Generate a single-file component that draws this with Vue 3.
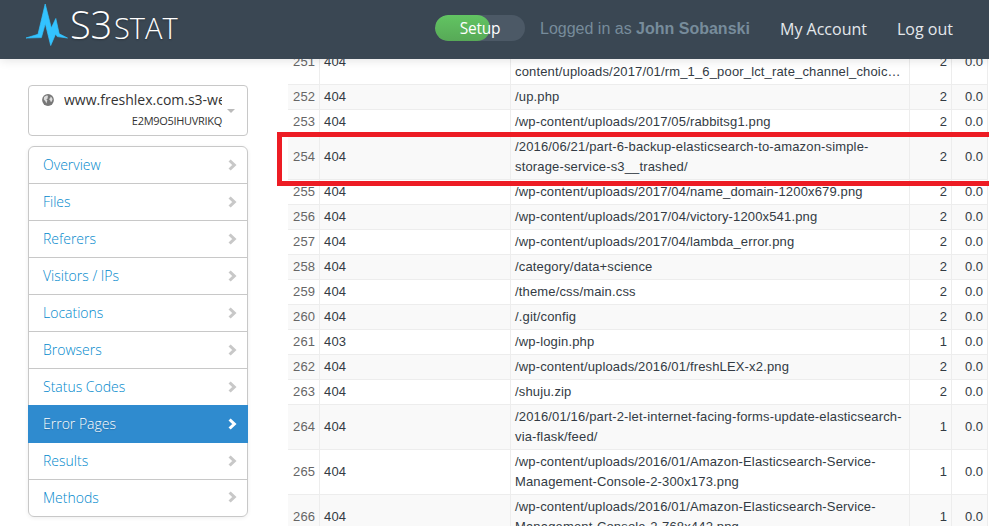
<script setup>
const links = ['Overview', 'Files', 'Referers', 'Visitors / IPs', 'Locations', 'Browsers', 'Status Codes', 'Error Pages', 'Results', 'Methods']
const active = 'Error Pages'

const rows = [
  { n: 251, code: 404, lines: ['/wp-', 'content/uploads/2017/01/rm_1_6_poor_lct_rate_channel_choic…'], hits: 2 },
  { n: 252, code: 404, lines: ['/up.php'], hits: 2 },
  { n: 253, code: 404, lines: ['/wp-content/uploads/2017/05/rabbitsg1.png'], hits: 2 },
  { n: 254, code: 404, lines: ['/2016/06/21/part-6-backup-elasticsearch-to-amazon-simple-', 'storage-service-s3__trashed/'], hits: 2, marked: true },
  { n: 255, code: 404, lines: ['/wp-content/uploads/2017/04/name_domain-1200x679.png'], hits: 2 },
  { n: 256, code: 404, lines: ['/wp-content/uploads/2017/04/victory-1200x541.png'], hits: 2 },
  { n: 257, code: 404, lines: ['/wp-content/uploads/2017/04/lambda_error.png'], hits: 2 },
  { n: 258, code: 404, lines: ['/category/data+science'], hits: 2 },
  { n: 259, code: 404, lines: ['/theme/css/main.css'], hits: 2 },
  { n: 260, code: 404, lines: ['/.git/config'], hits: 2 },
  { n: 261, code: 403, lines: ['/wp-login.php'], hits: 1 },
  { n: 262, code: 404, lines: ['/wp-content/uploads/2016/01/freshLEX-x2.png'], hits: 2 },
  { n: 263, code: 404, lines: ['/shuju.zip'], hits: 2 },
  { n: 264, code: 404, lines: ['/2016/01/16/part-2-let-internet-facing-forms-update-elasticsearch-', 'via-flask/feed/'], hits: 1 },
  { n: 265, code: 404, lines: ['/wp-content/uploads/2016/01/Amazon-Elasticsearch-Service-', 'Management-Console-2-300x173.png'], hits: 1 },
  { n: 266, code: 404, lines: ['/wp-content/uploads/2016/01/Amazon-Elasticsearch-Service-', 'Management-Console-2-768x442.png'], hits: 1 },
]
</script>

<template>
  <div class="page">
    <header class="bar">
      <div class="brand">
        <svg class="pulse" width="42" height="44" viewBox="0 0 42 44">
          <path d="M0 34 L12 30.3 L19.2 0 L25.3 24 L29.8 14.5 L33.2 29.8 L41.5 34 L31.3 32.6 L29.6 30 L24.7 41.5 L19.3 19.5 L15.4 33.6 Z" fill="#33c3ff" stroke="#33c3ff" stroke-width=".7" />
        </svg>
        <span class="name">S3<span class="small">STAT</span></span>
      </div>
      <div class="setup"><span class="done"></span><span class="label">Setup</span></div>
      <div class="user">Logged in as <b>John Sobanski</b></div>
      <a class="top account">My Account</a>
      <a class="top">Log out</a>
    </header>

    <div class="body">
      <aside>
        <div class="picker">
          <svg class="globe" width="12" height="12" viewBox="0 0 12 12">
            <circle cx="6" cy="6" r="5.9" fill="#777" />
            <path d="M2 3 L4.4 1.5 L6.3 1.7 L5.4 3.2 L6.2 4 L4.4 5.2 L5.4 6.5 L5 7.6 L4.3 9.4 L3.4 7.3 L1.8 5.5Z M8 2.4 L9.8 3.4 L10.6 5.2 L9.8 7.6 L8.8 8 L8.3 6.4 L7.3 5.8 L7.5 4.5 L8.6 3.9Z" fill="#ddd" />
          </svg>
          <div class="site">
            <div class="host">www.freshlex.com.s3-website</div>
            <div class="id">E2M9O5IHUVRIKQ</div>
          </div>
          <span class="caret"></span>
        </div>
        <nav>
          <a v-for="l in links" :key="l" :class="{ active: l === active }">
            <span>{{ l }}</span>
            <svg width="9" height="12" viewBox="0 0 9 12"><path d="M1.6 1.5 L6.3 6 L1.6 10.5" fill="none" stroke="currentColor" stroke-width="3.1" /></svg>
          </a>
        </nav>
      </aside>

      <main>
        <div v-for="r in rows" :key="r.n" class="row" :class="{ odd: r.n % 2 === 0 }">
          <div class="n">{{ r.n }}</div>
          <div class="code">{{ r.code }}</div>
          <div class="url"><span v-for="t in r.lines" :key="t">{{ t }}</span></div>
          <div class="num">{{ r.hits }}</div>
          <div class="num">0.0</div>
          <div v-if="r.marked" class="mark"></div>
        </div>
      </main>
    </div>
  </div>
</template>

<style>
body { margin: 0; overflow: hidden; background: #fff; }
</style>

<style scoped>
* { box-sizing: border-box; }
.page { width: 989px; height: 526px; overflow: hidden; display: flex; flex-direction: column; font-family: "Liberation Sans", Arial, sans-serif; color: #333b44; }
.bar { position: relative; z-index: 2; flex: none; height: 59px; display: flex; align-items: center; background: #3a4753; box-shadow: 0 1px 10px rgba(0, 0, 0, .12); padding-left: 26px; white-space: nowrap; }
.brand { flex: none; width: 409px; height: 59px; display: flex; align-items: flex-start; font-family: "Open Sans", sans-serif; font-weight: 300; color: #fff; text-shadow: 0 1px 2px rgba(0, 0, 0, .3); }
.pulse { flex: none; margin-top: 4px; }
.name { font-size: 38px; line-height: 48px; letter-spacing: -.2px; margin-left: 2px; }
.small { font-size: 29px; letter-spacing: 0; margin-left: 2px; }
.setup { flex: none; position: relative; width: 90px; height: 26px; border-radius: 13px; background: #4c5966; margin-bottom: 4px; overflow: hidden; display: flex; align-items: center; justify-content: center; }
.done { position: absolute; left: 0; top: 0; width: 55px; height: 26px; border-radius: 13px; background: linear-gradient(#62c462, #57a957); }
.label { position: relative; font: 15.5px/26px "Open Sans", sans-serif; letter-spacing: -.2px; color: #fff; }
.user { flex: none; width: 255px; padding: 0 0 2px 15px; font-size: 16px; color: #778c9b; }
.top { flex: none; font: 16px/24px "Open Sans", sans-serif; color: #e4e8ec; padding-bottom: 2px; }
.account { width: 117px; }
.body { flex: 1; min-height: 0; display: flex; }
aside { flex: none; width: 288px; padding: 26px 40px 0 28px; font-family: "Open Sans", sans-serif; }
.picker { height: 51px; border: 1px solid #c8c8c8; border-radius: 4px; display: flex; margin-bottom: 10px; padding-left: 13px; }
.globe { flex: none; margin-top: 8px; }
.site { width: 158px; margin-left: 10px; color: #333; white-space: nowrap; }
.host { font-size: 14px; line-height: 20px; margin-top: 4px; overflow: hidden; }
.id { font-size: 11px; line-height: 20px; margin-top: 1px; text-align: right; letter-spacing: -.3px; }
.caret { margin: 23px 0 0 5px; width: 0; height: 0; border: 4px solid transparent; border-top-color: #bbb; border-bottom: 0; }
nav { border: 1px solid #c8c8c8; border-radius: 6px; box-shadow: 0 1px 4px rgba(0, 0, 0, .07); }
nav a { display: flex; align-items: center; justify-content: space-between; height: 37px; padding: 0 10px 1px 14px; border-bottom: 1px solid #c8c8c8; font-size: 14px; font-weight: 300; color: #08c; }
nav a:last-child { border-bottom: 0; height: 36px; padding-bottom: 2px; }
nav svg { color: #c8c8c8; }
nav a.active { margin: -1px -1px 0; height: 38px; padding: 1px 11px 1px 15px; border-color: #2f8bcf; background: #2f8bcf; color: #fff; text-shadow: 0 1px 1px rgba(0, 0, 0, .2); }
nav a.active svg { color: #fff; }
main { flex: none; width: 701px; margin-top: -20px; font-size: 13px; }
.row { position: relative; width: 700px; display: grid; grid-template-columns: 31px 191px 399px 42px 37px; border-top: 1px solid #ededed; line-height: 20px; }
.row > div:not(.mark) { display: flex; align-items: center; padding: 2px 4px; border-left: 1px solid #ededed; white-space: nowrap; }
.row > div.n { color: #666; padding-left: 5px; border-left: 0; }
.row > div.n, .row > div.code { letter-spacing: .2px; }
.row > div.url { flex-direction: column; align-items: flex-start; letter-spacing: .155px; }
.row > div.num { justify-content: flex-end; }
.row > div.num:nth-child(5) { border-right: 1px solid #ededed; }
.odd { background: #f9f9f9; }
.mark { position: absolute; z-index: 1; left: -11px; top: -3px; width: 730px; height: 54px; border: 5px solid #ed1c24; }
</style>
